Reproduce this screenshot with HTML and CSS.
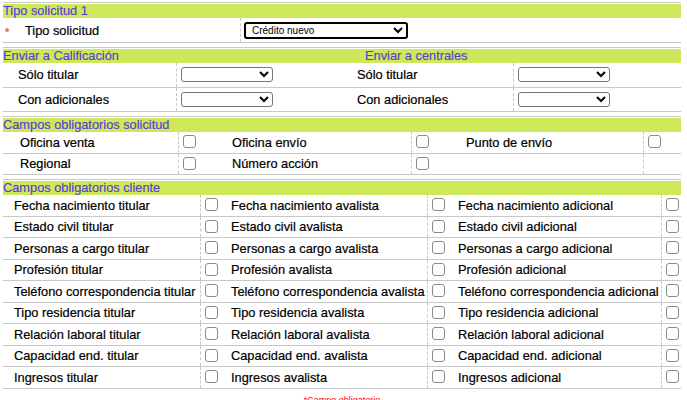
FILE: index.html
```html
<!DOCTYPE html>
<html lang="es">
<head>
<meta charset="utf-8">
<title>Tipo solicitud</title>
<link rel="stylesheet" href="styles.css">
</head>
<body>
<div class="form">
  <section class="sec s1">
    <div class="hdr">Tipo solicitud 1</div>
    <div class="row">
      <div class="cell lbl"><span class="req">*</span>Tipo solicitud</div>
      <div class="cell ctl"><select class="sel big"><option>Crédito nuevo</option></select></div>
    </div>
  </section>

  <section class="sec s2">
    <div class="hdr hdr2"><span>Enviar a Calificación</span><span class="h2r">Enviar a centrales</span></div>
    <div class="row">
      <div class="cell lbl">Sólo titular</div>
      <div class="cell ctl"><select class="sel"><option></option></select></div>
      <div class="cell lbl">Sólo titular</div>
      <div class="cell ctl"><select class="sel"><option></option></select></div>
    </div>
    <div class="row">
      <div class="cell lbl">Con adicionales</div>
      <div class="cell ctl"><select class="sel"><option></option></select></div>
      <div class="cell lbl">Con adicionales</div>
      <div class="cell ctl"><select class="sel"><option></option></select></div>
    </div>
  </section>

  <section class="sec s3">
    <div class="hdr">Campos obligatorios solicitud</div>
    <div class="row">
      <div class="cell lbl l1">Oficina venta</div>
      <div class="cell ctl"><input type="checkbox"></div>
      <div class="cell lbl l2">Oficina envío</div>
      <div class="cell ctl"><input type="checkbox"></div>
      <div class="cell lbl l3">Punto de envío</div>
      <div class="cell ctl"><input type="checkbox"></div>
    </div>
    <div class="row">
      <div class="cell lbl l1">Regional</div>
      <div class="cell ctl"><input type="checkbox"></div>
      <div class="cell lbl l2">Número acción</div>
      <div class="cell ctl"><input type="checkbox"></div>
      <div class="cell lbl l3"></div>
      <div class="cell ctl"></div>
    </div>
  </section>

  <section class="sec s4">
    <div class="hdr">Campos obligatorios cliente</div>
    <div class="row"><div class="cell lbl l1">Fecha nacimiento titular</div><div class="cell ctl"><input type="checkbox"></div><div class="cell lbl">Fecha nacimiento avalista</div><div class="cell ctl"><input type="checkbox"></div><div class="cell lbl">Fecha nacimiento adicional</div><div class="cell ctl"><input type="checkbox"></div></div>
    <div class="row"><div class="cell lbl l1">Estado civil titular</div><div class="cell ctl"><input type="checkbox"></div><div class="cell lbl">Estado civil avalista</div><div class="cell ctl"><input type="checkbox"></div><div class="cell lbl">Estado civil adicional</div><div class="cell ctl"><input type="checkbox"></div></div>
    <div class="row"><div class="cell lbl l1">Personas a cargo titular</div><div class="cell ctl"><input type="checkbox"></div><div class="cell lbl">Personas a cargo avalista</div><div class="cell ctl"><input type="checkbox"></div><div class="cell lbl">Personas a cargo adicional</div><div class="cell ctl"><input type="checkbox"></div></div>
    <div class="row"><div class="cell lbl l1">Profesión titular</div><div class="cell ctl"><input type="checkbox"></div><div class="cell lbl">Profesión avalista</div><div class="cell ctl"><input type="checkbox"></div><div class="cell lbl">Profesión adicional</div><div class="cell ctl"><input type="checkbox"></div></div>
    <div class="row"><div class="cell lbl l1">Teléfono correspondencia titular</div><div class="cell ctl"><input type="checkbox"></div><div class="cell lbl">Teléfono correspondencia avalista</div><div class="cell ctl"><input type="checkbox"></div><div class="cell lbl">Teléfono correspondencia adicional</div><div class="cell ctl"><input type="checkbox"></div></div>
    <div class="row"><div class="cell lbl l1">Tipo residencia titular</div><div class="cell ctl"><input type="checkbox"></div><div class="cell lbl">Tipo residencia avalista</div><div class="cell ctl"><input type="checkbox"></div><div class="cell lbl">Tipo residencia adicional</div><div class="cell ctl"><input type="checkbox"></div></div>
    <div class="row"><div class="cell lbl l1">Relación laboral titular</div><div class="cell ctl"><input type="checkbox"></div><div class="cell lbl">Relación laboral avalista</div><div class="cell ctl"><input type="checkbox"></div><div class="cell lbl">Relación laboral adicional</div><div class="cell ctl"><input type="checkbox"></div></div>
    <div class="row"><div class="cell lbl l1">Capacidad end. titular</div><div class="cell ctl"><input type="checkbox"></div><div class="cell lbl">Capacidad end. avalista</div><div class="cell ctl"><input type="checkbox"></div><div class="cell lbl">Capacidad end. adicional</div><div class="cell ctl"><input type="checkbox"></div></div>
    <div class="row"><div class="cell lbl l1">Ingresos titular</div><div class="cell ctl"><input type="checkbox"></div><div class="cell lbl">Ingresos avalista</div><div class="cell ctl"><input type="checkbox"></div><div class="cell lbl">Ingresos adicional</div><div class="cell ctl"><input type="checkbox"></div></div>
  </section>

  <p class="note">*Campo obligatorio</p>
</div>
</body>
</html>
```

FILE: styles.css
```css
html, body {
  margin: 0;
  padding: 0;
  background: #fff;
}
body {
  font-family: "Liberation Sans", Arial, sans-serif;
  font-size: 12.8px;
  color: #000;
}
.form {
  margin: 2px 0 0 3px;
  width: 678px;
}
.sec {
  border-top: 1px solid #c8c8c8;
  padding-top: 1px;
  margin-bottom: 4px;
}
.hdr {
  background: #cde85a;
  color: #5a3dd6;
  height: 14px;
  line-height: 14px;
  white-space: nowrap;
  -webkit-text-stroke: 0.15px #5a3dd6;
}
.hdr2 {
  display: grid;
  grid-template-columns: 339px 1fr;
}
.h2r {
  padding-left: 23px;
}
.row {
  display: grid;
  align-items: stretch;
  border-bottom: 1px solid #c8c8c8;
  box-sizing: border-box;
}
.cell {
  display: flex;
  align-items: center;
  white-space: nowrap;
}
.lbl {
  -webkit-text-stroke: 0.2px #000;
}
.ctl {
  border-left: 1px dashed #c8c8c8;
}

/* section 1 */
.s1 .row {
  grid-template-columns: 237px 1fr;
  height: 25px;
}
.req {
  color: #f04a4a;
  width: 22px;
  padding-left: 2px;
  padding-top: 4px;
  font-size: 11px;
  box-sizing: border-box;
  -webkit-text-stroke: 0.4px #f07070;
}
.s1 .ctl {
  padding-left: 3px;
}
.sel {
  font-family: "Liberation Sans", Arial, sans-serif;
  width: 92px;
  height: 15px;
  padding: 0 2px;
  font-size: 10px;
  border: 1px solid #767676;
  border-radius: 3px;
  background: #fff;
  margin: 0;
}
.sel.big {
  width: 164px;
  height: 17px;
  border: 2px solid #000;
  font-size: 10px;
  color: #000;
}

/* section 2 */
.s2 .row {
  grid-template-columns: 173px 166px 171px 1fr;
  height: 24.5px;
}
.s2 .lbl {
  padding-left: 15px;
}
.s2 .ctl {
  padding-left: 4px;
}

/* section 3 */
.s3 .row {
  grid-template-columns: 175px 50px 183px 49px 183px 1fr;
  height: 21.5px;
}
.s3 .l1 { padding-left: 17px; }
.s3 .l2 { padding-left: 4px; }
.s3 .l3 { padding-left: 6px; }
.s3 .ctl { padding-left: 4px; }

/* section 4 */
.s4 .row {
  grid-template-columns: 197px 27px 200px 27px 207px 1fr;
  height: 21.5px;
}
.s4 .lbl { padding-left: 4px; }
.s4 .l1 { padding-left: 11px; }
.s4 .ctl { padding-left: 4px; }

input[type="checkbox"] {
  -webkit-appearance: none;
  appearance: none;
  box-sizing: border-box;
  width: 13px;
  height: 13px;
  margin: 0 0 1px 0;
  border: 1px solid #8a8a8a;
  border-radius: 3px;
  background: #fff;
}

.note {
  margin: 0;
  padding-top: 2px;
  text-align: center;
  color: #f00;
  font-size: 9px;
}
```
